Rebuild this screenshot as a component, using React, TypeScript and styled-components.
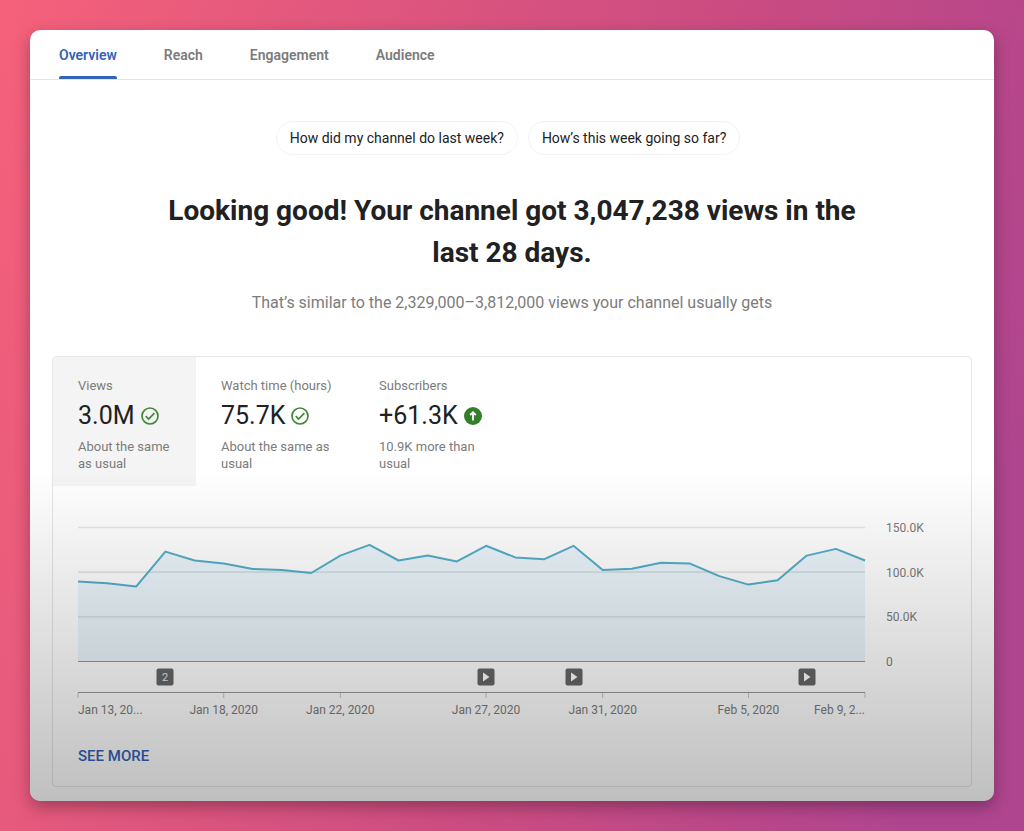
import React from "react";
import styled, { createGlobalStyle } from "styled-components";

const GlobalStyle = createGlobalStyle`
  *, *::before, *::after { box-sizing: border-box; }
  body {
    margin: 0;
    font-family: Roboto, "Liberation Sans", sans-serif;
    color: #212121;
  }
`;

const Backdrop = styled.div`
  min-height: 100vh;
  padding: 30px;
  background: linear-gradient(107deg, #f5617a 0%, #c94b82 60%, #b0458f 90%);
`;

const Window = styled.main`
  position: relative;
  padding-bottom: 14px;
  overflow: hidden;
  border-radius: 10px;
  background: #fff;
`;

const WindowShadow = styled.div`
  border-radius: 10px;
  box-shadow: 0 6px 16px rgba(0, 0, 0, 0.3);
`;

const Shade = styled.div`
  position: absolute;
  inset: 440px 0 0;
  pointer-events: none;
  background: linear-gradient(rgba(0, 0, 0, 0), rgba(0, 0, 0, 0.25));
`;

const TabBar = styled.nav`
  display: flex;
  gap: 47px;
  height: 50px;
  padding: 0 29px;
  border-bottom: 1px solid #e4e4e4;
`;

const Tab = styled.a<{ $active?: boolean }>`
  position: relative;
  display: flex;
  align-items: center;
  height: 49px;
  color: ${(p) => (p.$active ? "#3364b8" : "#7c7c7c")};
  font-size: 14px;
  line-height: 20px;
  font-weight: 600;
  text-decoration: none;

  &::after {
    content: "";
    position: absolute;
    inset: auto 0 0;
    height: 3px;
    border-radius: 2px 2px 0 0;
    background: ${(p) => (p.$active ? "#3364b8" : "transparent")};
  }
`;

const Chips = styled.div`
  display: flex;
  justify-content: center;
  gap: 10px;
  margin-top: 41px;
  padding-right: 8px;
`;

const Chip = styled.button`
  height: 34px;
  padding: 0 13px;
  border: 1px solid #f3f3f3;
  border-radius: 17px;
  background: #fff;
  color: #212121;
  font: 400 14px/20px Roboto, sans-serif;
  cursor: pointer;
`;

const Headline = styled.h1`
  max-width: 740px;
  margin: 35px auto 0;
  font-size: 28px;
  line-height: 42px;
  font-weight: 700;
  text-align: center;
`;

const Subline = styled.p`
  margin: 19px 0 0;
  color: #7c7c7c;
  font-size: 16px;
  line-height: 20px;
  text-align: center;
`;

const Panel = styled.section`
  margin: 43px 22px 0;
  border: 1px solid #e6e6e6;
  border-radius: 4px;
`;

const Metrics = styled.div`
  display: flex;
`;

const Metric = styled.button<{ $active?: boolean; $width: number }>`
  display: flex;
  flex-direction: column;
  align-items: flex-start;
  width: ${(p) => p.$width}px;
  height: 129px;
  padding: 20px 22px 0 25px;
  border: 0;
  background: ${(p) => (p.$active ? "#f4f4f4" : "transparent")};
  color: #7c7c7c;
  font: 400 13px/17px Roboto, sans-serif;
  text-align: left;
  cursor: pointer;
`;

const MetricLabel = styled.span`
  white-space: nowrap;
`;

const MetricValue = styled.span`
  display: flex;
  align-items: center;
  gap: 6px;
  margin: 7px 0;
  color: #212121;
  font-size: 25px;
  line-height: 30px;
  white-space: nowrap;
`;

const Chart = styled.svg`
  display: block;
  width: 100%;
  height: auto;
  margin-top: 27px;
  font-family: Roboto, sans-serif;
`;

const SeeMore = styled.a`
  display: inline-block;
  margin: 25px 25px 20px;
  color: #3364b8;
  font-size: 15px;
  line-height: 20px;
  font-weight: 500;
  text-decoration: none;
`;

const CheckIcon = () => (
  <svg width="18" height="18" viewBox="0 0 18 18" fill="none" stroke="#3f8a34" aria-hidden="true">
    <circle cx="9" cy="9" r="8" strokeWidth="1.7" />
    <path d="M4.8 9.2 7.6 12 13.4 6.2" strokeWidth="1.7" />
  </svg>
);

const UpIcon = () => (
  <svg width="18" height="18" viewBox="0 0 18 18" aria-hidden="true">
    <circle cx="9" cy="9" r="9" fill="#34802a" />
    <path d="M9 13.6V6M6.2 8 9 5.2 11.8 8" fill="none" stroke="#fff" strokeWidth="1.8" />
  </svg>
);

const tabs = ["Overview", "Reach", "Engagement", "Audience"];

const metrics = [
  { label: "Views", value: "3.0M", note: "About the same as usual", width: 143, icon: <CheckIcon /> },
  { label: "Watch time (hours)", value: "75.7K", note: "About the same as usual", width: 158, icon: <CheckIcon /> },
  { label: "Subscribers", value: "+61.3K", note: "10.9K more than usual", width: 158, icon: <UpIcon /> },
];

// Daily views in thousands, Jan 13 to Feb 9.
const views = [
  89, 87, 83.5, 122.5, 112.5, 109, 103, 102, 98.5, 118, 130, 112.5, 118, 111.5,
  129, 116, 114, 129, 102, 103.2, 110, 109, 95, 85.5, 90.5, 118, 125.5, 112.5,
];

const LEFT = 25;
const RIGHT = 812;
const BASE = 148;
const dayX = (day: number) => LEFT + (day * (RIGHT - LEFT)) / (views.length - 1);
const valueY = (value: number) => BASE - (value * 134) / 150;

const line = views.map((v, i) => `${dayX(i).toFixed(1)},${valueY(v).toFixed(1)}`).join(" ");

const levels = [
  { value: 150, label: "150.0K" },
  { value: 100, label: "100.0K" },
  { value: 50, label: "50.0K" },
  { value: 0, label: "0" },
];

const dates: { day: number; label: string; anchor: "start" | "middle" | "end" }[] = [
  { day: 0, label: "Jan 13, 20...", anchor: "start" },
  { day: 5, label: "Jan 18, 2020", anchor: "middle" },
  { day: 9, label: "Jan 22, 2020", anchor: "middle" },
  { day: 14, label: "Jan 27, 2020", anchor: "middle" },
  { day: 18, label: "Jan 31, 2020", anchor: "middle" },
  { day: 23, label: "Feb 5, 2020", anchor: "middle" },
  { day: 27, label: "Feb 9, 2...", anchor: "end" },
];

const uploads = [{ day: 3, count: 2 }, { day: 14 }, { day: 17 }, { day: 25 }];

const ViewsChart = () => (
  <Chart viewBox="0 0 918 208" role="img" aria-label="Views per day">
    {levels.map((l) => (
      <g key={l.label}>
        {l.value > 0 && (
          <path d={`M${LEFT} ${valueY(l.value) + 0.5}H${RIGHT}`} stroke="#e6e6e6" strokeWidth="1.6" />
        )}
        <text x="833" y={valueY(l.value) + 5} fontSize="12" fill="#7c7c7c">{l.label}</text>
      </g>
    ))}
    <polygon points={`${LEFT},${BASE} ${line} ${RIGHT},${BASE}`} fill="#5aaee0" fillOpacity="0.13" />
    <polyline points={line} fill="none" stroke="#54aec8" strokeWidth="2" strokeLinejoin="round" />
    <path d={`M${LEFT} ${BASE + 0.5}H${RIGHT}M${LEFT} 179.5H${RIGHT}`} stroke="#959595" />
    {uploads.map((u) => (
      <g key={u.day} transform={`translate(${Math.round(dayX(u.day))} 164)`}>
        <rect x="-8.5" y="-8.5" width="17" height="17" rx="2" fill="#666" />
        {u.count ? (
          <text y="4" fontSize="11" fill="#e8e8e8" textAnchor="middle">{u.count}</text>
        ) : (
          <path d="M-3-4.5 3.5 0-3 4.5Z" fill="#fff" />
        )}
      </g>
    ))}
    {dates.map((d) => (
      <g key={d.label}>
        <path d={`M${dayX(d.day)} 180v5`} stroke="#c4c4c4" />
        <text x={dayX(d.day)} y="201" fontSize="12" fill="#7c7c7c" textAnchor={d.anchor}>{d.label}</text>
      </g>
    ))}
  </Chart>
);

export default function App() {
  return (
    <>
      <GlobalStyle />
      <Backdrop>
        <WindowShadow>
          <Window>
            <TabBar aria-label="Analytics">
              {tabs.map((t, i) => (
                <Tab key={t} href="#" $active={i === 0}>{t}</Tab>
              ))}
            </TabBar>
            <Chips>
              <Chip type="button">How did my channel do last week?</Chip>
              <Chip type="button">How’s this week going so far?</Chip>
            </Chips>
            <Headline>Looking good! Your channel got 3,047,238 views in the last 28 days.</Headline>
            <Subline>That’s similar to the 2,329,000–3,812,000 views your channel usually gets</Subline>
            <Panel>
              <Metrics>
                {metrics.map((m, i) => (
                  <Metric key={m.label} type="button" $active={i === 0} $width={m.width}>
                    <MetricLabel>{m.label}</MetricLabel>
                    <MetricValue>{m.value}{m.icon}</MetricValue>
                    <span>{m.note}</span>
                  </Metric>
                ))}
              </Metrics>
              <ViewsChart />
              <SeeMore href="#">SEE MORE</SeeMore>
            </Panel>
            <Shade />
          </Window>
        </WindowShadow>
      </Backdrop>
    </>
  );
}
